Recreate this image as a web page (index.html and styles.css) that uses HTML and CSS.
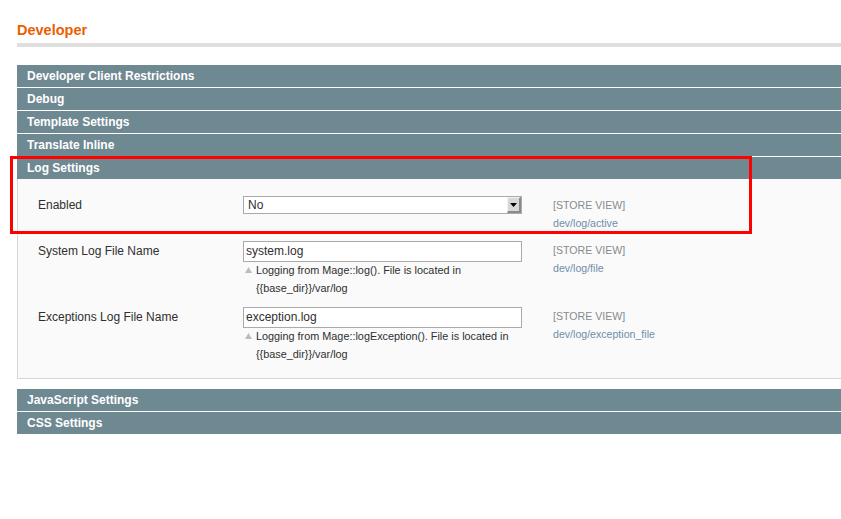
FILE: index.html
```html
<!DOCTYPE html>
<html>
<head>
<meta charset="utf-8">
<link rel="stylesheet" href="styles.css">
</head>
<body>
<div class="page">
  <h3 class="page-title">Developer</h3>
  <div class="sections">
    <div class="section-head">Developer Client Restrictions</div>
    <div class="section-head">Debug</div>
    <div class="section-head">Template Settings</div>
    <div class="section-head">Translate Inline</div>
    <div class="section">
      <div class="section-head">Log Settings</div>
      <div class="fieldset">
        <div class="row">
          <div class="label">Enabled</div>
          <div class="value">
            <div class="select"><span class="select-text">No</span><span class="select-btn"><svg width="7" height="4" viewBox="0 0 7 4"><path d="M0 0H7L3.5 4Z" fill="#000"/></svg></span></div>
          </div>
          <div class="scope"><div class="scope-label">[STORE VIEW]</div><div class="scope-path">dev/log/active</div></div>
        </div>
        <div class="row">
          <div class="label label-input">System Log File Name</div>
          <div class="value">
            <div class="input">system.log</div>
            <div class="note"><span class="note-icon"><svg width="7" height="6" viewBox="0 0 7 6"><path d="M3.5 0L7 6H0Z" fill="#b5bec2"/></svg></span><span class="note-text">Logging from Mage::log(). File is located in {{base_dir}}/var/log</span></div>
          </div>
          <div class="scope"><div class="scope-label">[STORE VIEW]</div><div class="scope-path">dev/log/file</div></div>
        </div>
        <div class="row">
          <div class="label label-input">Exceptions Log File Name</div>
          <div class="value">
            <div class="input">exception.log</div>
            <div class="note"><span class="note-icon"><svg width="7" height="6" viewBox="0 0 7 6"><path d="M3.5 0L7 6H0Z" fill="#b5bec2"/></svg></span><span class="note-text">Logging from Mage::logException(). File is located in {{base_dir}}/var/log</span></div>
          </div>
          <div class="scope"><div class="scope-label">[STORE VIEW]</div><div class="scope-path">dev/log/exception_file</div></div>
        </div>
      </div>
    </div>
    <div class="section-head after-open">JavaScript Settings</div>
    <div class="section-head">CSS Settings</div>
  </div>
  <div class="highlight"></div>
</div>
</body>
</html>
```

FILE: styles.css
```css
html, body {
  margin: 0;
  padding: 0;
  background: #ffffff;
}
body {
  font-family: "Liberation Sans", Arial, sans-serif;
  font-size: 12px;
  color: #2f2f2f;
  overflow: hidden;
}
.page {
  position: relative;
  padding-left: 17px;
}
.page-title {
  margin: 0;
  padding-top: 21px;
  padding-bottom: 4px;
  line-height: 18px;
  font-size: 14.5px;
  font-weight: bold;
  color: #eb5e00;
  border-bottom: 4px solid #dfdfdf;
}
.sections {
  margin-top: 18px;
  display: flex;
  flex-direction: column;
  gap: 1px;
}
.section-head {
  background: #6f8992;
  color: #ffffff;
  font-weight: bold;
  font-size: 12px;
  line-height: 22px;
  height: 22px;
  padding-left: 10px;
}
.section-head.after-open {
  margin-top: 9px;
}
.fieldset {
  background: #fafafa;
  border: 1px solid #d6d6d6;
  border-top: none;
  border-right: none;
  padding: 17px 0 14px 20px;
  display: flex;
  flex-direction: column;
  gap: 9px;
}
.row {
  display: grid;
  grid-template-columns: 205px 279px 1fr;
  align-items: start;
}
.label {
  font-size: 12px;
  line-height: 18px;
  color: #2f2f2f;
}
.label-input {
  padding-top: 1px;
}
.select {
  box-sizing: border-box;
  height: 18px;
  border: 1px solid #aaaaaa;
  background: #ffffff;
  display: flex;
  align-items: center;
  justify-content: space-between;
}
.select-text {
  padding-left: 4px;
  font-size: 12px;
  line-height: 16px;
  color: #2f2f2f;
}
.select-btn {
  box-sizing: border-box;
  width: 14px;
  height: 16px;
  background: #d8d8d8;
  border-top: 1px solid #f2f2f2;
  border-left: 1px solid #f2f2f2;
  border-right: 2px solid #8a8a8a;
  border-bottom: 2px solid #8a8a8a;
  display: flex;
  align-items: center;
  justify-content: center;
}
.input {
  box-sizing: border-box;
  height: 21px;
  border: 1px solid #aaaaaa;
  background: #ffffff;
  padding: 0 2px;
  font-size: 12px;
  line-height: 19px;
  color: #2f2f2f;
}
.note {
  display: flex;
  margin-top: -1px;
  margin-bottom: 1px;
  font-size: 10.85px;
  line-height: 18px;
  color: #2f2f2f;
}
.note-icon {
  flex: none;
  width: 13px;
  padding-left: 2px;
  box-sizing: border-box;
  display: flex;
  align-items: flex-start;
  padding-top: 6px;
}
.scope {
  padding-left: 31px;
  font-size: 10.6px;
  line-height: 18px;
}
.scope-label {
  color: #868b90;
}
.scope-path {
  color: #6f8ea8;
}
.highlight {
  position: absolute;
  left: 10px;
  top: 156px;
  width: 742px;
  height: 78px;
  box-sizing: border-box;
  border: 3px solid #ff0000;
  pointer-events: none;
}
```
